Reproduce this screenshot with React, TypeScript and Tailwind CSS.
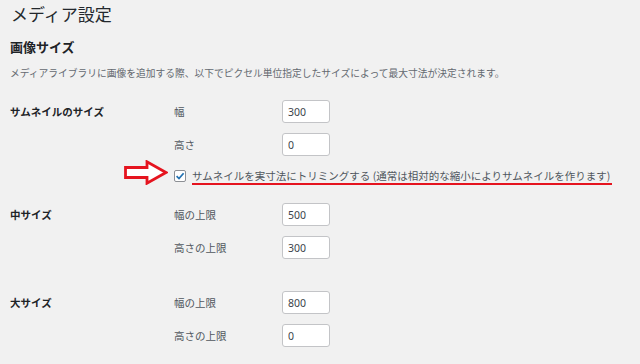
import React from 'react';

const jp = { fontFamily: '"Noto Sans CJK JP", "Noto Sans", sans-serif' };

function SizeInput({ value }: { value: string }) {
  return (
    <input
      type="text"
      defaultValue={value}
      className="w-[48px] h-[23px] bg-white border border-[#c3c4c7] rounded-[3px] px-[5px] text-[10.5px] text-[#3c434a] outline-none"
      style={{ fontFamily: '"Noto Sans", sans-serif' }}
    />
  );
}

function Row({ label, value, className = '' }: { label: string; value: string; className?: string }) {
  return (
    <div className={`flex items-center h-[23px] ${className}`}>
      <span className="w-[108px] text-[10.5px] text-[#50575e]">{label}</span>
      <SizeInput value={value} />
    </div>
  );
}

function Section({ title, children, className = '' }: { title: string; children: React.ReactNode; className?: string }) {
  return (
    <div className={`flex ${className}`}>
      <div className="w-[164px] h-[23px] flex items-center text-[10.5px] font-bold text-[#1d2327]">{title}</div>
      <div className="flex flex-col">{children}</div>
    </div>
  );
}

export default function App() {
  return (
    <div className="w-[640px] h-[364px] bg-[#f1f1f1] overflow-hidden pl-[10px] pr-[10px] pt-[4px]" style={jp}>
      <h1 className="ml-[1px] text-[17px] leading-[20px] text-[#23282d]">メディア設定</h1>
      <h2 className="mt-[15px] text-[13px] leading-[16px] font-bold text-[#1d2327]">画像サイズ</h2>
      <p className="mt-[11px] text-[9.75px] leading-[14px] text-[#646970]">
        メディアライブラリに画像を追加する際、以下でピクセル単位指定したサイズによって最大寸法が決定されます。
      </p>

      <Section title="サムネイルのサイズ" className="mt-[20px]">
        <Row label="幅" value="300" />
        <Row label="高さ" value="0" className="mt-[10px]" />
        <div className="relative mt-[12px] flex items-start h-[18px]">
          {/* red arrow annotation */}
          <svg width="44" height="25" viewBox="0 0 44 25" className="absolute left-[-50px] top-[-8px]">
            <path d="M1.5 7.5 H23 V1.8 L42 12.5 L23 23.2 V17.5 H1.5 Z" fill="#fff" stroke="#e5141f" strokeWidth="2.8" strokeLinejoin="miter" />
          </svg>
          <span className="mt-[2px] w-[12px] h-[12px] bg-white border border-[#8c8f94] rounded-[2px] flex items-center justify-center">
            <svg width="10" height="10" viewBox="0 0 10 10">
              <path d="M1.6 5.2 L4 7.6 L8.6 2.2" fill="none" stroke="#2271b1" strokeWidth="1.7" />
            </svg>
          </span>
          <span className="ml-[6px] text-[10.5px] leading-[15px] text-[#50575e] border-b-2 border-[#e5141f] whitespace-nowrap pr-[2px]">
            サムネイルを実寸法にトリミングする (通常は相対的な縮小によりサムネイルを作ります)
          </span>
        </div>
      </Section>

      <Section title="中サイズ" className="mt-[17px]">
        <Row label="幅の上限" value="500" />
        <Row label="高さの上限" value="300" className="mt-[10px]" />
      </Section>

      <Section title="大サイズ" className="mt-[32px]">
        <Row label="幅の上限" value="800" />
        <Row label="高さの上限" value="0" className="mt-[10px]" />
      </Section>
    </div>
  );
}
